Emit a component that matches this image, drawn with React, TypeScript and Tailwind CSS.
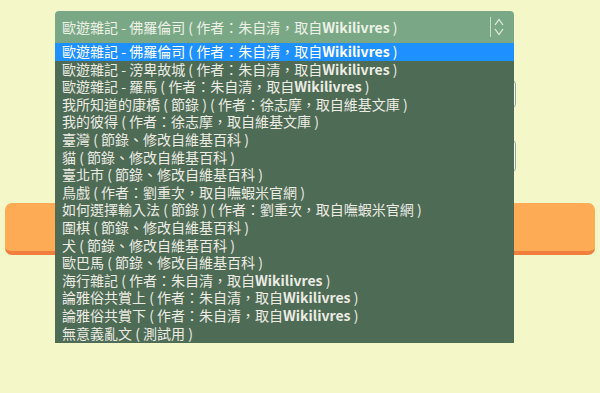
import React from "react";

type Item = { title: string; latin?: boolean };

const items: Item[] = [
  { title: "歐遊雜記 - 佛羅倫司 ( 作者：朱自清，取自", latin: true },
  { title: "歐遊雜記 - 滂卑故城 ( 作者：朱自清，取自", latin: true },
  { title: "歐遊雜記 - 羅馬 ( 作者：朱自清，取自", latin: true },
  { title: "我所知道的康橋 ( 節錄 ) ( 作者：徐志摩，取自維基文庫 )" },
  { title: "我的彼得 ( 作者：徐志摩，取自維基文庫 )" },
  { title: "臺灣 ( 節錄、修改自維基百科 )" },
  { title: "貓 ( 節錄、修改自維基百科 )" },
  { title: "臺北市 ( 節錄、修改自維基百科 )" },
  { title: "鳥戲 ( 作者：劉重次，取自嘸蝦米官網 )" },
  { title: "如何選擇輸入法 ( 節錄 ) ( 作者：劉重次，取自嘸蝦米官網 )" },
  { title: "圍棋 ( 節錄、修改自維基百科 )" },
  { title: "犬 ( 節錄、修改自維基百科 )" },
  { title: "歐巴馬 ( 節錄、修改自維基百科 )" },
  { title: "海行雜記 ( 作者：朱自清，取自", latin: true },
  { title: "論雅俗共賞上 ( 作者：朱自清，取自", latin: true },
  { title: "論雅俗共賞下 ( 作者：朱自清，取自", latin: true },
  { title: "無意義亂文 ( 測試用 )" },
];

function Label({ item }: { item: Item }) {
  return (
    <>
      {item.title}
      {item.latin && (
        <>
          <span className="font-bold">Wikilivres</span> )
        </>
      )}
    </>
  );
}

export default function App() {
  const font = { fontFamily: '"Noto Sans CJK TC", "Noto Sans", sans-serif' };
  return (
    <div className="relative h-[393px] w-[600px] overflow-hidden bg-[#f4f8c9] text-[14px]" style={font}>
      <div className="flex flex-col pt-[11px]">
        <div className="ml-[55px] flex h-[32px] w-[459px] items-center rounded-t-[4px] bg-[#7aa886] pl-[7px] pr-[8px] text-[#eef2e6]">
          <span className="flex-1 truncate">
            <Label item={items[0]} />
          </span>
          <span className="mr-[3px] h-[20px] w-px bg-[#c9ddc9]" />
          <svg width="10" height="18" viewBox="0 0 10 18" className="mr-[2px]">
            <path d="M1 7 L5 1.5 L9 7 M1 11 L5 16.5 L9 11" fill="none" stroke="#e3eee0" strokeWidth="1.2" />
          </svg>
        </div>
        <div className="ml-[55px] mt-[37px] h-[28px] w-[461px] rounded-[4px] border border-[#8fa895] bg-[#f7f9ee]" />
        <div className="ml-[55px] mt-[32px] h-[32px] w-[461px] rounded-[4px] border border-[#8fa895] bg-[#f7f9ee]" />
        <div className="mx-[5px] mt-[31px] h-[52px] rounded-[7px] border-b-[4px] border-[#f07f3e] bg-[#fdac55]" />
      </div>

      <ul className="absolute left-[55px] top-[43px] w-[459px] bg-[#4e6b55] pb-[1px] text-[#ecece4]">
        {items.map((item, i) => (
          <li
            key={i}
            className={
              i === 0
                ? "h-[17.6px] whitespace-nowrap bg-[#1e90ff] pl-[7px] leading-[17.6px] text-white"
                : "h-[17.6px] whitespace-nowrap pl-[7px] leading-[17.6px]"
            }
          >
            <Label item={item} />
          </li>
        ))}
      </ul>
    </div>
  );
}
